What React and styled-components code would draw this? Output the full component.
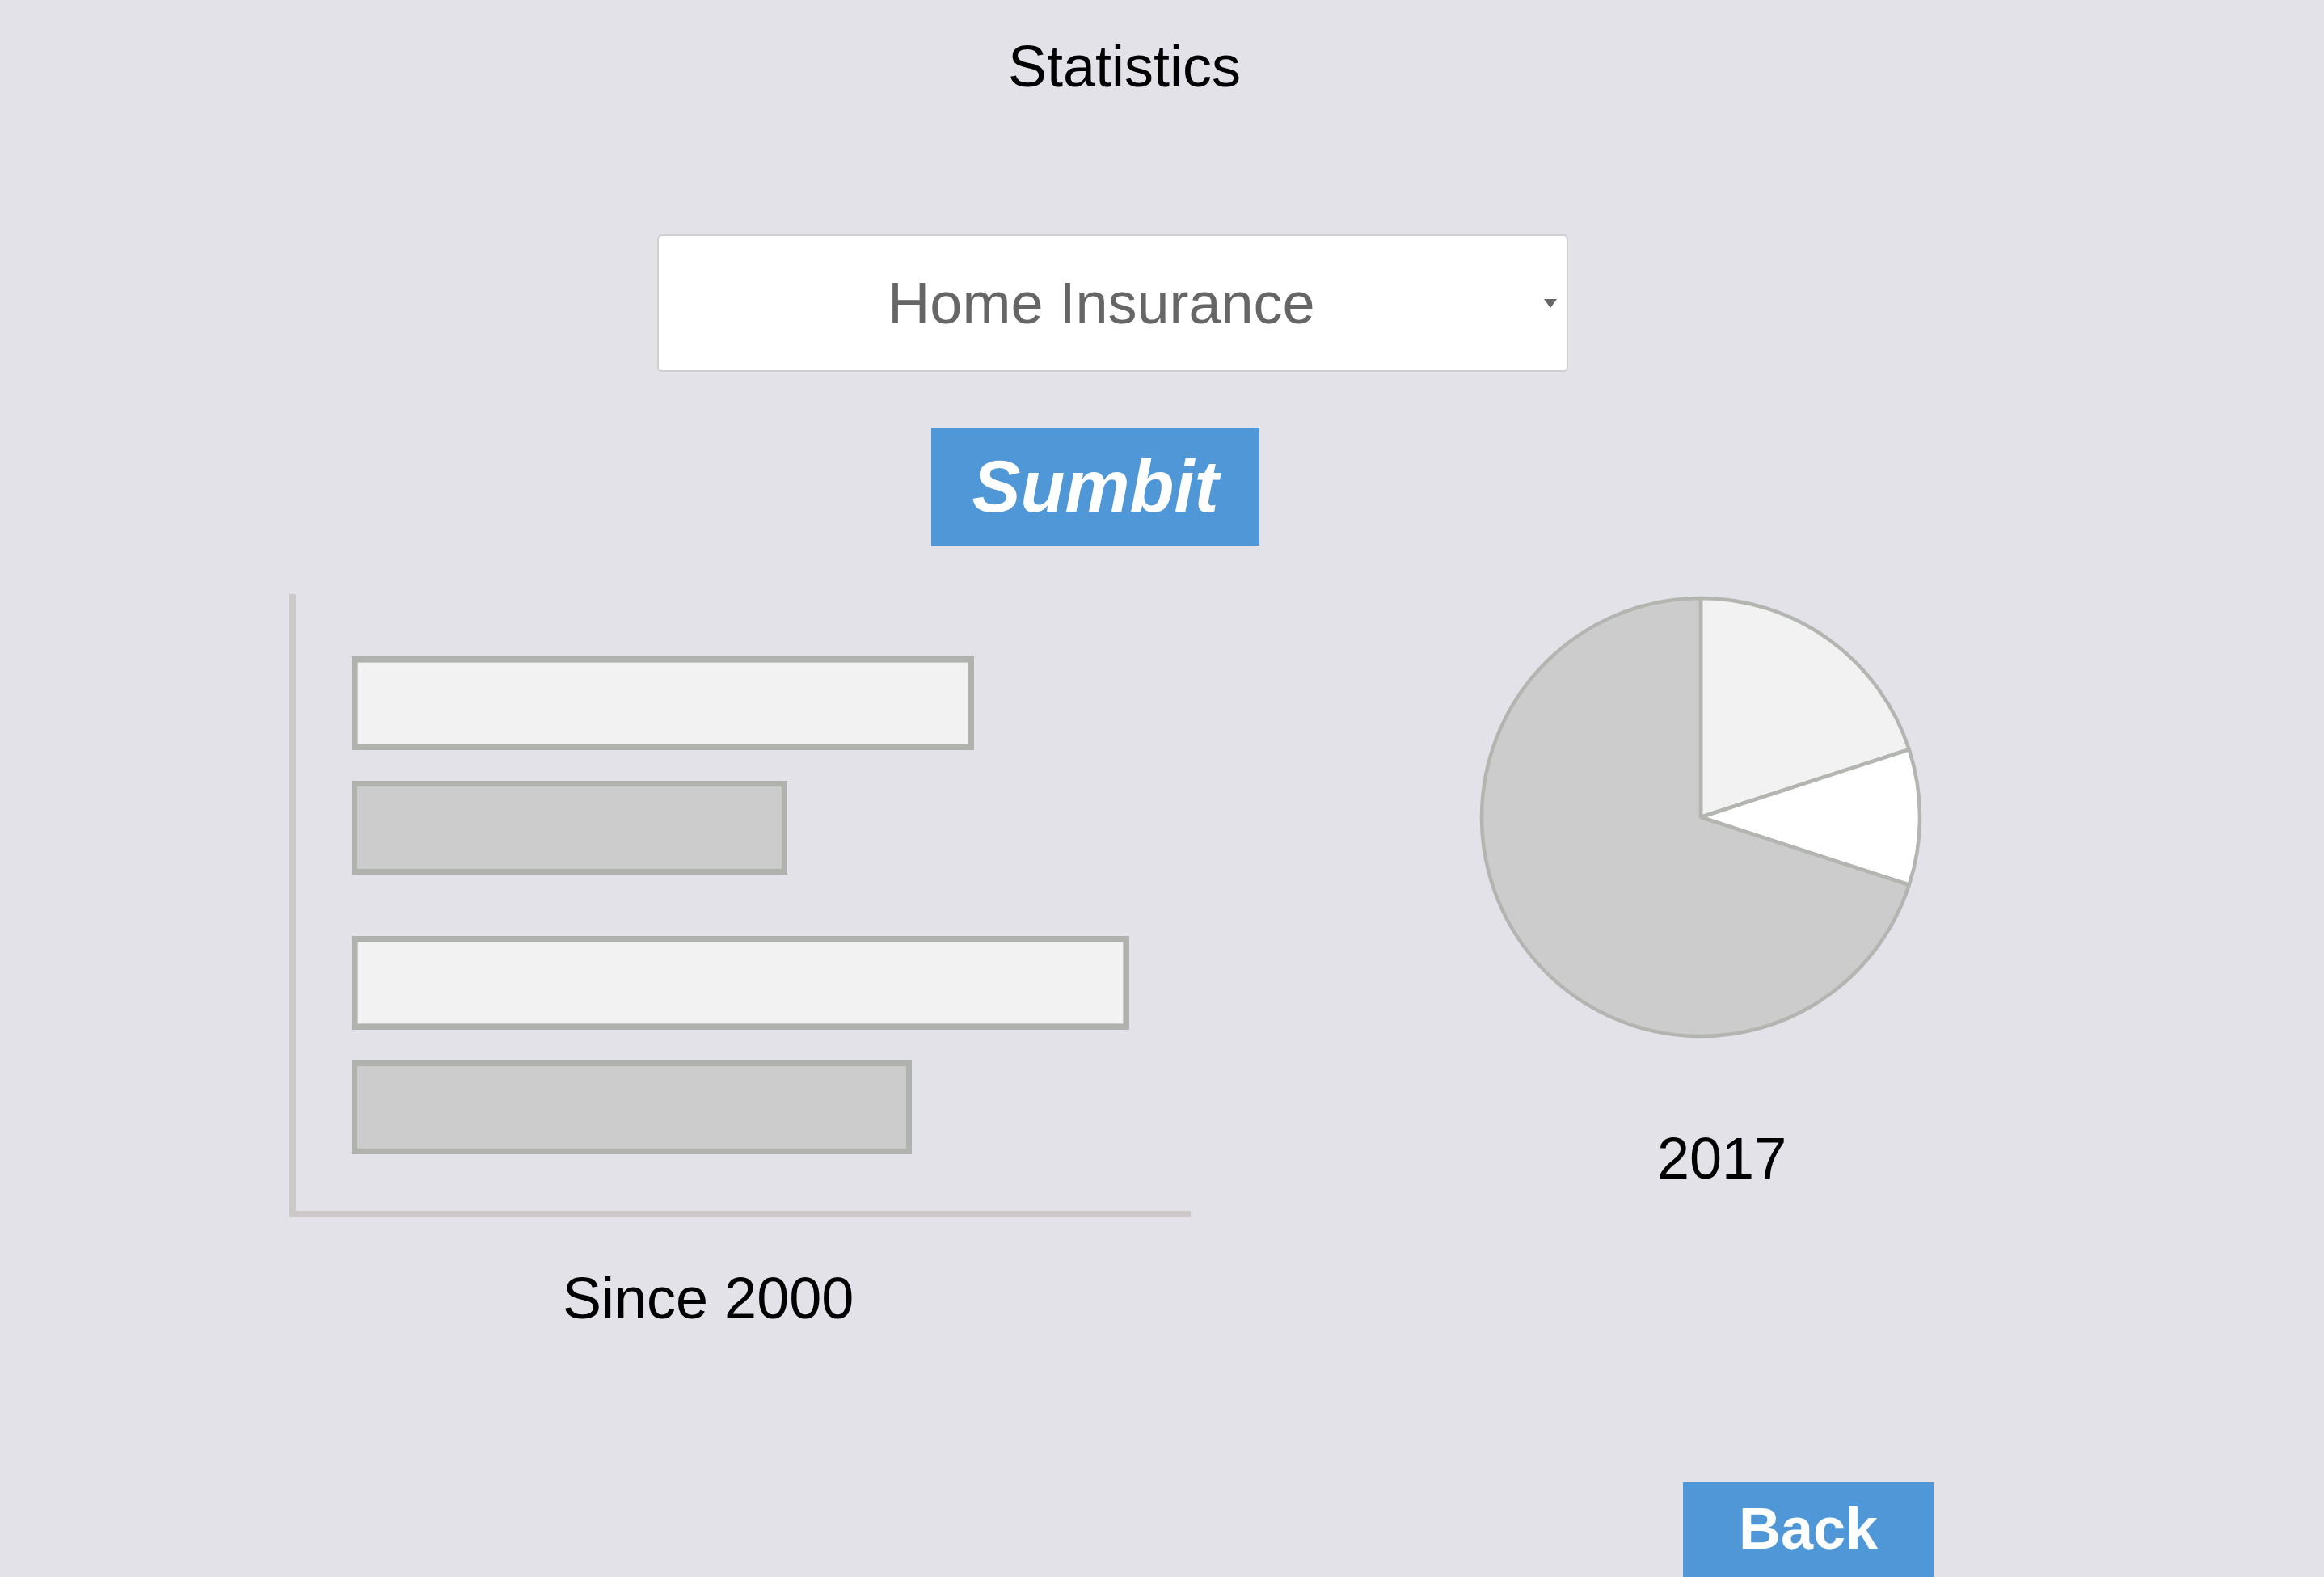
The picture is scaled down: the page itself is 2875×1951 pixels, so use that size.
import React from "react";
import styled, { createGlobalStyle } from "styled-components";

const GlobalStyle = createGlobalStyle`
  html, body { margin: 0; padding: 0; background: #e2e2e8; }
  body { font-family: "Liberation Sans", Arial, sans-serif; }
  * { box-sizing: border-box; }
`;

const Page = styled.div`
  width: 2875px;
  padding-top: 46px;
  display: flex;
  flex-direction: column;
  align-items: flex-start;
  background: #e2e2e8;
`;

const Title = styled.h1`
  margin: 0 0 0 1247px;
  font-size: 72px;
  font-weight: 400;
  line-height: 72px;
  color: #000;
`;

const SelectBox = styled.div`
  margin: 172px 0 0 813px;
  width: 1127px;
  height: 170px;
  border: 2px solid #cfcfcf;
  border-radius: 6px;
  background: #fff;
  display: flex;
  align-items: center;
  padding-right: 12px;
`;

const SelectLabel = styled.span`
  flex: 1;
  text-align: center;
  font-size: 72px;
  line-height: 72px;
  color: #666;
`;

const Caret = styled.span`
  width: 0;
  height: 0;
  border-left: 8px solid transparent;
  border-right: 8px solid transparent;
  border-top: 11px solid #666;
`;

const ActionButton = styled.button`
  margin: ${(p) => p.$mt}px 0 0 ${(p) => p.$ml}px;
  width: ${(p) => p.$w}px;
  height: ${(p) => p.$h}px;
  padding: 0 0 ${(p) => p.$pb || 0}px;
  border: none;
  background: #4f97d6;
  color: #fff;
  font-family: "Liberation Sans", Arial, sans-serif;
  font-weight: 700;
  font-style: ${(p) => (p.$italic ? "italic" : "normal")};
  font-size: ${(p) => p.$fs}px;
  line-height: 1;
  cursor: pointer;
`;

const ChartsRow = styled.div`
  margin-top: 56px;
  display: flex;
  align-items: flex-start;
`;

const BarColumn = styled.div`
  margin-left: 358px;
  margin-top: 4px;
  display: flex;
  flex-direction: column;
`;

const Plot = styled.div`
  width: 1115px;
  border-left: 8px solid #ccc8c8;
  border-bottom: 8px solid #ccc8c8;
  padding: 77px 0 70px 69px;
  display: flex;
  flex-direction: column;
  gap: 76px;
`;

const BarGroup = styled.div`
  display: flex;
  flex-direction: column;
  gap: 38px;
`;

const Bar = styled.div`
  width: ${(p) => p.$w}px;
  height: 116px;
  border: 7px solid #b0b2ad;
  box-shadow: inset 0 0 0 1px #c9cac7;
  background: ${(p) => p.$tone};
`;

const ChartLabel = styled.div`
  margin-top: ${(p) => p.$mt}px;
  padding-left: ${(p) => p.$pl}px;
  font-size: 72px;
  line-height: 72px;
  color: #000;
`;

const PieColumn = styled.div`
  margin-left: 351px;
  display: flex;
  flex-direction: column;
`;

const PieSvg = styled.svg`
  display: block;
`;

const slices = [
  { value: 20, color: "#f2f2f2" },
  { value: 10, color: "#ffffff" },
  { value: 70, color: "#cccccc" },
];

function Pie() {
  const cx = 280, cy = 280, r = 271;
  let angle = -90;
  const total = slices.reduce((s, d) => s + d.value, 0);
  const paths = slices.map((d, i) => {
    const a0 = angle;
    const a1 = angle + (d.value / total) * 360;
    angle = a1;
    const rad = (a) => (a * Math.PI) / 180;
    const x0 = cx + r * Math.cos(rad(a0));
    const y0 = cy + r * Math.sin(rad(a0));
    const x1 = cx + r * Math.cos(rad(a1));
    const y1 = cy + r * Math.sin(rad(a1));
    const large = a1 - a0 > 180 ? 1 : 0;
    return (
      <path
        key={i}
        d={`M${cx} ${cy} L${x0} ${y0} A${r} ${r} 0 ${large} 1 ${x1} ${y1} Z`}
        fill={d.color}
        stroke="#b3b5b0"
        strokeWidth="4.5"
        strokeLinejoin="round"
      />
    );
  });
  return (
    <PieSvg width="560" height="560" viewBox="0 0 560 560">
      {paths}
    </PieSvg>
  );
}

const bars = [
  [
    { w: 770, tone: "#f2f2f2" },
    { w: 539, tone: "#cccccc" },
  ],
  [
    { w: 962, tone: "#f2f2f2" },
    { w: 693, tone: "#cccccc" },
  ],
];

export default function App() {
  return (
    <>
      <GlobalStyle />
      <Page>
        <Title>Statistics</Title>
        <SelectBox>
          <SelectLabel>Home Insurance</SelectLabel>
          <Caret />
        </SelectBox>
        <ActionButton $mt={69} $ml={1152} $w={406} $h={146} $fs={90} $italic>
          Sumbit
        </ActionButton>
        <ChartsRow>
          <BarColumn>
            <Plot>
              {bars.map((group, gi) => (
                <BarGroup key={gi}>
                  {group.map((b, bi) => (
                    <Bar key={bi} $w={b.w} $tone={b.tone} />
                  ))}
                </BarGroup>
              ))}
            </Plot>
            <ChartLabel $mt={64} $pl={338}>Since 2000</ChartLabel>
          </BarColumn>
          <PieColumn>
            <Pie />
            <ChartLabel $mt={106} $pl={226}>2017</ChartLabel>
          </PieColumn>
        </ChartsRow>
        <ActionButton $mt={192} $ml={2082} $w={310} $h={130} $pb={16} $fs={72}>
          Back
        </ActionButton>
      </Page>
    </>
  );
}
